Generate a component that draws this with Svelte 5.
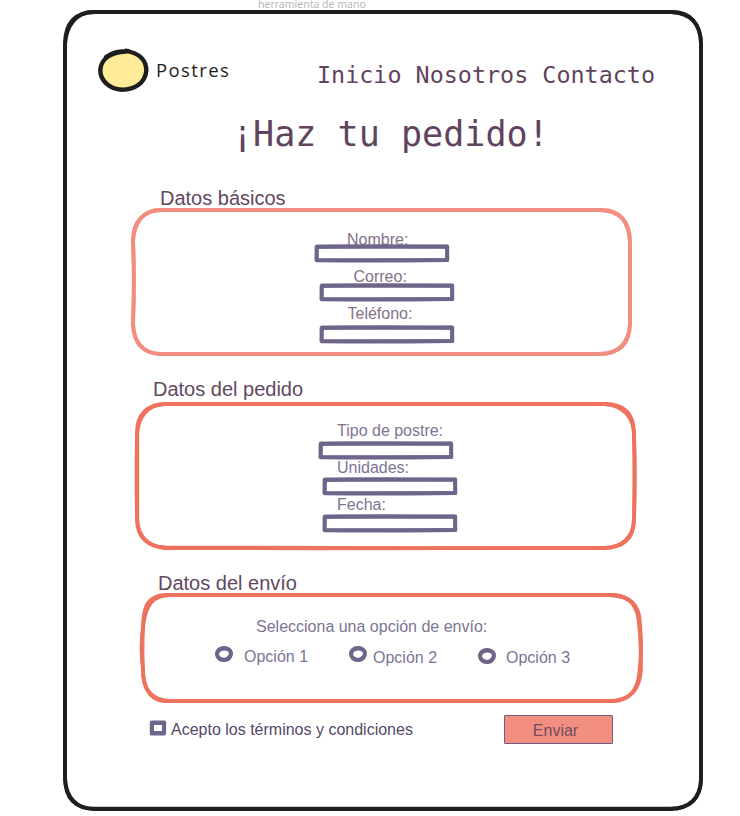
<script>
  const basics = [
    { label: 'Nombre:', x: 347, inputX: 313.5, gap: 25, labelH: 13 },
    { label: 'Correo:', x: 353.5, inputX: 318.5, gap: 5, labelH: 15 },
    { label: 'Teléfono:', x: 347.5, inputX: 318.5, gap: 3, labelH: 20 }
  ];
  const order = [
    { label: 'Tipo de postre:', x: 337, inputX: 317.5, gap: 22, labelH: 19 },
    { label: 'Unidades:', x: 337, inputX: 321.5, gap: -1, labelH: 18 },
    { label: 'Fecha:', x: 337, inputX: 321.5, gap: 0, labelH: 17.5 }
  ];
</script>

{#snippet fields(items, left)}
  {#each items as f}
    <div class="field" style:margin-top="{f.gap}px">
      <label style:margin-left="{f.x - left}px" style:height="{f.labelH}px" for={f.label}>{f.label}</label>
      <svg id={f.label} class="input" style:margin-left="{f.inputX - left}px" width="136" height="19" viewBox="0 0 136 19" fill="none">
        <path d="M2.5 3 C28 1.9 92 2.1 133.3 2.5 L133.3 16 C95 16.5 35 16.7 2.7 16.3 Z" />
        <path d="M3 2.5 C45 2.9 90 3 133 2.7 L133.2 16.2 C89 15.8 43 16.4 2.5 16.1 Z" />
      </svg>
    </div>
  {/each}
{/snippet}

<div class="page">
  <div class="hint">herramienta de mano</div>
  <main>
    <svg class="frame dark" viewBox="60 8 648 804" fill="none">
      <path d="M95 12 H672 C690 12 701 23 701 45 V779 C701 798 690 809 670 809 H95 C75 809 65 798 65 778 V44 C65 23 75 12 95 12 Z" />
      <path d="M93 12 H671 C691 13 701 25 701 44 V780 C700 798 690 808 671 808.7 H92 C78 808 66 799 65 778 V45 C66 25 77 12 93 12 Z" />
    </svg>
    <header>
      <svg class="logo" width="54" height="46" viewBox="97 48 54 46">
        <path d="M101 65 C105 53 119 52 127 51 C140 54 146 61 147 70 C146 84 137 90 123 91 C108 90 100 82 100 71 Z" fill="#ffec99" />
        <path d="M106 57 C113 52 120 51 128 51 M126 50.8 C139 53 146.5 60 146.3 71 C145 83 135 89.5 122 89.8 C109 89 100 80 100.3 70 C101 60 109 52.5 126 51.5" fill="none" stroke="#1e1e1e" stroke-width="4.4" stroke-linecap="round" />
      </svg>
      <span class="brand">Postres</span>
      <nav>Inicio Nosotros Contacto</nav>
    </header>
    <h1>¡Haz tu pedido!</h1>

    <section class="basics">
      <h2>Datos básicos</h2>
      <div class="box">
        <svg class="frame salmon" viewBox="129 206 505 151" fill="none">
          <path d="M162 210 H600 C620 211 630 221 630 242 V323 C630 344 620 354 599 354 H162 C143 354 133 344 133 322 C134 295 134 269 133 240 C133 222 143 210 162 210 Z" />
          <path d="M160 210 H602 C620 210 629 222 630 243 V323 C629 344 617 354 598 354 H160 C144 353 134 343 133 324 C134 301 134.5 269 133 242 C134 223 143 210 160 210 Z" />
        </svg>
        {@render fields(basics, 129)}
      </div>
    </section>

    <section class="order">
      <h2>Datos del pedido</h2>
      <div class="box">
        <svg class="frame coral" viewBox="133 400 505 151" fill="none">
          <path d="M166 404 H605 C625 404 634 415 634 434 C635 463 634.6 491 634 519 C634 538 625 548 603 548 C460 547.6 302 549 166 547.5 C148 547 137 538 137 519 C136.5 491 136.5 460 137 432 C137 415 147 404 166 404 Z" />
          <path d="M164 404 H604 C623 405 634 417 634 436 C634.8 462 634.8 493 634 520 C633 539 621 547 604 548 C450 548.7 311 548.4 164 548 C149 546 138 538 137.3 519 V434 C138 416 148 405 164 404 Z" />
        </svg>
        {@render fields(order, 133)}
      </div>
    </section>

    <section class="shipping">
      <h2>Datos del envío</h2>
      <div class="box">
        <svg class="frame coral" viewBox="137 591 509 114" fill="none">
          <path d="M170 595 H609 C630 596 640 604 640 625 C641.5 641 641.5 656 639.5 671 C638 691 630 701 608 701 H170 C151 700 143 690 143 669 C141 654 141 639 143.5 624 C146 605 153 595 170 595 Z" />
          <path d="M165 595 H614 C629 596 638 605 639 624 C641 640 641 656 640.8 671 C640 688 630 700 615 701 H164 C150 700 143 687 143 671 C142 654 142.5 639 143 624 C144 606 148 596 165 595 Z" />
        </svg>
        <p>Selecciona una opción de envío:</p>
        <div class="options">
          {#each [1, 2, 3] as n}
            <span class="option o{n}">
              <svg width="20" height="18" viewBox="0 0 20 18" fill="none">
                <path d="M3 9 C3 5 6 2.9 10 2.8 C14 2.7 17 5 17 9 C16.8 12.8 14 15.2 10 15.2 C6 15.2 3 13 3 9 Z" />
                <path d="M3.6 7 C6 3 13 2.4 16.3 6 C18 10 15 14.2 10 14.9 C5 14.4 2 11 3.6 7 Z" />
              </svg>
              <span>Opción {n}</span>
            </span>
          {/each}
        </div>
      </div>
    </section>

    <footer>
      <svg class="check" width="18" height="16" viewBox="0 0 18 16" fill="none">
        <path d="M2.7 2.5 L15.3 2.3 L15.1 13.5 L2.7 13.7 Z M3 3 H14.9 V13 H3.2 Z" />
      </svg>
      <span class="terms">Acepto los términos y condiciones</span>
      <button>Enviar</button>
    </footer>
  </main>
</div>

<style>
  :global(body) { margin: 0; background: #fff; }
  .page {
    width: 740px; height: 816px; overflow: hidden; background: #fff;
    font-family: "Liberation Sans", Arial, sans-serif;
  }
  .hint {
    height: 8px; margin-left: 258px; line-height: 8px;
    font-family: "Noto Sans", sans-serif; font-size: 10.5px; color: #b8b8b8; white-space: nowrap;
  }
  main { position: relative; width: 648px; height: 804px; margin-left: 60px; }
  .frame { position: absolute; inset: 0; width: 100%; height: 100%; stroke-width: 3.8; pointer-events: none; }
  .dark { stroke: #1e1e1e; }
  .salmon { stroke: #f28e80; }
  .coral { stroke: #ed735f; }
  header { display: flex; height: 64px; padding: 40px 0 0 37px; }
  .logo { flex: none; }
  .brand {
    width: 161px; margin-left: 5px; padding-top: 10px; line-height: 24px;
    font-family: "Open Sans", sans-serif; font-size: 18.5px; letter-spacing: 1.4px; color: #1e1e1e;
  }
  nav {
    padding-top: 13px; line-height: 28px; white-space: pre;
    font-family: "DejaVu Sans Mono", monospace; font-size: 23.4px; color: #5f445d;
  }
  h1 {
    margin: 0 0 0 172px; height: 76px; white-space: pre;
    font: 400 35.1px/44px "DejaVu Sans Mono", monospace; color: #5f445d;
  }
  h2 { margin: 0; font-weight: 400; font-size: 20px; line-height: 20px; height: 18px; color: #62485f; white-space: nowrap; }
  .box { position: relative; display: flow-root; }
  .basics { width: 505px; margin-left: 69px; height: 191px; }
  .basics h2 { padding-left: 31px; }
  .basics .box { height: 151px; }
  .order { width: 505px; margin-left: 73px; height: 194px; }
  .order h2 { padding-left: 20px; height: 21px; }
  .order .box { height: 151px; }
  .shipping { width: 509px; margin-left: 77px; }
  .shipping h2 { padding-left: 21px; }
  .shipping .box { height: 114px; }
  .field { display: flex; flex-direction: column; }
  label { font-size: 16px; line-height: 18px; color: #857188; white-space: nowrap; }
  .order label { color: #7d7493; }
  .input { display: block; stroke: #6f658a; stroke-width: 3.8; stroke-linejoin: round; }
  p { margin: 27px 0 0 119px; font-size: 16px; line-height: 18px; color: #7d7493; }
  .options { display: flex; padding-left: 77px; margin-top: 9px; }
  .option { display: flex; height: 22px; font-size: 16px; line-height: 18px; color: #7d7493; }
  .option svg { flex: none; stroke: #6f658a; stroke-width: 3.7; }
  .option span { padding-top: 3px; white-space: nowrap; }
  .o1 { width: 134px; }
  .o1 span { margin-left: 10px; }
  .o2 { width: 129px; }
  .o2 span { margin-left: 5px; padding-top: 4px; }
  .o3 svg { margin-top: 2px; }
  .o3 span { margin-left: 9px; padding-top: 4px; }
  footer { display: flex; margin: 10px 0 0 89px; height: 30px; }
  .check { flex: none; margin-top: 5px; stroke: #6f658a; stroke-width: 3.8; stroke-linejoin: round; }
  .terms { width: 333px; margin-left: 4px; padding-top: 6px; font-size: 16px; line-height: 18px; color: #534969; }
  button {
    width: 109px; height: 29px; padding: 3px 6px 0 0; border: 1.5px solid #705d82; border-radius: 1px;
    background: #f38f80; color: #744a60; font: 16px/18px "Liberation Sans", Arial, sans-serif;
  }
</style>
